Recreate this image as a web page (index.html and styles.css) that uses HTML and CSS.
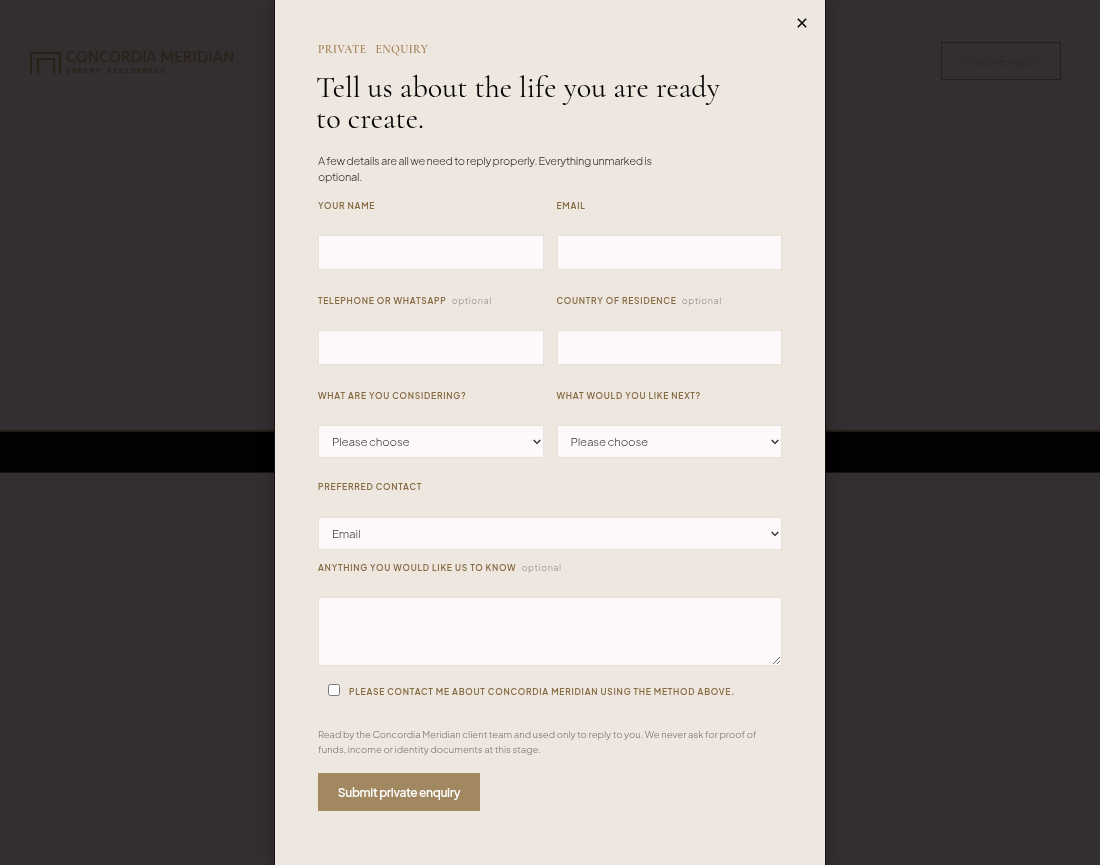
FILE: index.html
```html
<!DOCTYPE html>
<html lang="en">
<head>
  <meta charset="utf-8">
  <title>Concordia Meridian - Private Enquiry</title>
  <link rel="stylesheet" href="styles.css">
</head>
<body>
  <div class="page">
    <header class="site-header">
      <div class="brand">
        <svg class="brand-mark" width="32" height="24" viewBox="0 0 32 24" fill="none" stroke="currentColor" stroke-width="2">
          <path d="M1 23V2H30V23M8 23V8H24V23"/>
        </svg>
        <div class="brand-text">
          <span class="brand-name">CONCORDIA MERIDIAN</span>
          <span class="brand-sub">LUXURY RESIDENCES</span>
        </div>
      </div>
      <a class="header-button">Private Enquiry</a>
    </header>
    <div class="band"></div>
  </div>

  <div class="overlay">
    <div class="modal" role="dialog" aria-labelledby="modalTitle">
      <button class="close" type="button" aria-label="Close">
        <svg width="10" height="10" viewBox="0 0 10 10" stroke="currentColor" stroke-width="1.5">
          <path d="M.8 .8L9.2 9.2M9.2 .8L.8 9.2"/>
        </svg>
      </button>

      <p class="eyebrow">PRIVATE ENQUIRY</p>
      <h2 id="modalTitle">Tell us about the life you are ready<br>to create.</h2>
      <p class="intro">A few details are all we need to reply properly. Everything unmarked is<br>optional.</p>

      <form id="enquiryForm">
        <div class="form-grid">
          <div class="field">
            <label for="name">Your name</label>
            <input type="text" id="name">
          </div>
          <div class="field">
            <label for="email">Email</label>
            <input type="email" id="email">
          </div>
          <div class="field">
            <label for="phone">Telephone or WhatsApp <span class="optional">optional</span></label>
            <input type="tel" id="phone">
          </div>
          <div class="field">
            <label for="country">Country of residence <span class="optional">optional</span></label>
            <input type="text" id="country">
          </div>
          <div class="field">
            <label for="considering">What are you considering?</label>
            <select id="considering"><option>Please choose</option></select>
          </div>
          <div class="field">
            <label for="next">What would you like next?</label>
            <select id="next"><option>Please choose</option></select>
          </div>
        </div>
        <div class="field field-contact">
          <label for="contact">Preferred contact</label>
          <select id="contact"><option>Email</option></select>
        </div>
        <div class="field field-message">
          <label for="message">Anything you would like us to know <span class="optional">optional</span></label>
          <textarea id="message"></textarea>
        </div>
        <div class="consent">
          <input type="checkbox" id="consent">
          <label for="consent">Please contact me about Concordia Meridian using the method above.</label>
        </div>
        <p class="note">Read by the Concordia Meridian client team and used only to reply to you. We never ask for proof of<br>funds, income or identity documents at this stage.</p>
        <button class="submit" type="submit">Submit private enquiry</button>
      </form>
    </div>
  </div>
</body>
</html>
```
FILE: styles.css
```css
* {
  box-sizing: border-box;
}

body {
  margin: 0;
  height: 865px;
  overflow: hidden;
  background: #332e2f;
  font-family: "Plus Jakarta Sans", Inter, "Liberation Sans", sans-serif;
}

.page {
  display: flex;
  flex-direction: column;
  height: 865px;
}

.site-header {
  display: flex;
  justify-content: space-between;
  align-items: flex-start;
  height: 430px;
  padding: 42px 39px 0 30px;
}

.brand {
  display: flex;
  gap: 4px;
  padding-top: 9px;
  color: #292018;
}

.brand-text {
  display: flex;
  flex-direction: column;
}

.brand-name {
  font-family: Lato, sans-serif;
  font-size: 14.5px;
  line-height: 11px;
  letter-spacing: 0.4px;
  white-space: nowrap;
}

.brand-sub {
  margin-top: 5px;
  font-family: "Liberation Mono", monospace;
  font-size: 7px;
  font-weight: bold;
  line-height: 8px;
  letter-spacing: 1.7px;
}

.header-button {
  width: 120px;
  height: 38px;
  border: 1px solid #231f20;
  color: #2e292b;
  font-size: 12px;
  line-height: 38px;
  text-align: center;
}

.band {
  height: 43px;
  border-top: 2px solid #241a16;
  border-bottom: 1px solid #171415;
  background: #030104;
}

.overlay {
  position: fixed;
  inset: 0;
  display: flex;
  justify-content: center;
}

.modal {
  position: relative;
  width: 552px;
  height: 865px;
  padding: 40px 43px 0;
  border-left: 1px solid #171314;
  border-right: 1px solid #171314;
  background: #eee7e0;
  box-shadow: 0 0 16px rgba(0, 0, 0, 0.25);
}

.close {
  position: absolute;
  top: 18px;
  right: 18px;
  display: flex;
  padding: 0;
  border: none;
  background: none;
  color: #000;
}

.eyebrow {
  margin: 0;
  color: #a17f53;
  font-family: "Cormorant Garamond", "Liberation Serif", serif;
  font-size: 11.5px;
  font-weight: 600;
  line-height: 18px;
  letter-spacing: 0.4px;
  word-spacing: 6px;
}

h2 {
  margin: 14px 0 0 -2px;
  color: #050405;
  font-family: "Cormorant Garamond", "Liberation Serif", serif;
  font-size: 30.2px;
  font-weight: 400;
  line-height: 31px;
  white-space: nowrap;
}

.intro {
  margin: 19px 0 0;
  color: #2f2a2d;
  font-size: 11px;
  font-weight: 300;
  line-height: 16px;
  letter-spacing: -0.3px;
  white-space: nowrap;
}

form {
  margin-top: 13px;
}

.form-grid {
  display: grid;
  grid-template-columns: 1fr 1fr;
  column-gap: 13px;
  row-gap: 23px;
}

.field {
  display: flex;
  flex-direction: column;
}

label {
  color: #856a42;
  font-size: 8.5px;
  font-weight: 600;
  line-height: 16px;
  letter-spacing: 0.74px;
  text-transform: uppercase;
  white-space: nowrap;
}

.optional {
  margin-left: 3px;
  color: #a39b9b;
  font-size: 9px;
  font-weight: 400;
  letter-spacing: 0.55px;
  text-transform: none;
}

.field input,
.field select,
.field textarea {
  width: 100%;
  margin: 21px 0 0;
  border: 1px solid #e8e1d9;
  border-radius: 0;
  background-color: #fdf9fb;
  color: #3d3940;
  font-family: inherit;
  font-size: 11.5px;
  font-weight: 300;
}

.field input {
  height: 35px;
  padding: 0 13px;
}

.field select {
  height: 33px;
  padding: 0 13px;
  appearance: none;
  background-image: url("data:image/svg+xml,%3Csvg xmlns='http://www.w3.org/2000/svg' width='8' height='6' fill='none' stroke='%23222' stroke-width='1.2'%3E%3Cpath d='M.7 1L4 4.5L7.3 1'/%3E%3C/svg%3E");
  background-position: right 2px center;
  background-repeat: no-repeat;
  letter-spacing: -0.2px;
}

.field-contact {
  margin-top: 21px;
}

.field #contact {
  margin-top: 22px;
}

.field-message {
  margin-top: 10px;
}

.field textarea {
  height: 69px;
}

.consent {
  display: flex;
  gap: 9px;
  margin-top: 18px;
  padding-left: 10px;
}

.consent input {
  width: 12px;
  height: 12px;
  margin: 0;
}

.note {
  margin: 27px 0 0;
  color: #777072;
  font-size: 9.5px;
  font-weight: 300;
  line-height: 14.5px;
  white-space: nowrap;
}

.submit {
  width: 162px;
  height: 38px;
  margin-top: 17px;
  padding: 0;
  border: none;
  background: #a18860;
  color: #fff;
  font-family: inherit;
  font-size: 12px;
  font-weight: 600;
  letter-spacing: -0.35px;
}
```
